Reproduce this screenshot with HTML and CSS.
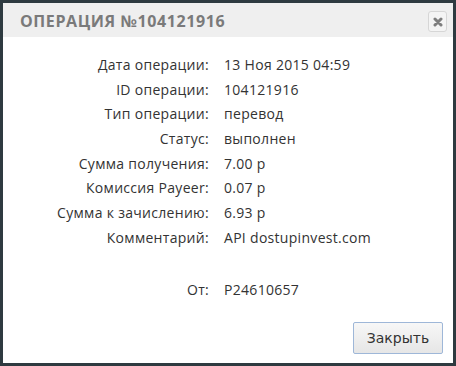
FILE: index.html
```html
<!DOCTYPE html>
<html lang="ru">
<head>
<meta charset="utf-8">
<link rel="stylesheet" href="styles.css">
</head>
<body>
<div class="dialog">
  <div class="header">
    <div class="title">ОПЕРАЦИЯ №104121916</div>
    <button class="close" aria-label="close">
      <svg width="10" height="10" viewBox="0 0 10 10"><path d="M2 2 L8 8 M8 2 L2 8" stroke="#7e7e7e" stroke-width="3" stroke-linecap="round"/></svg>
    </button>
  </div>
  <div class="body">
    <div class="rows">
      <div class="label">Дата операции:</div><div class="value">13 Ноя 2015 04:59</div>
      <div class="label">ID операции:</div><div class="value">104121916</div>
      <div class="label">Тип операции:</div><div class="value">перевод</div>
      <div class="label">Статус:</div><div class="value">выполнен</div>
      <div class="label">Сумма получения:</div><div class="value">7.00 р</div>
      <div class="label">Комиссия Payeer:</div><div class="value">0.07 р</div>
      <div class="label">Сумма к зачислению:</div><div class="value">6.93 р</div>
      <div class="label">Комментарий:</div><div class="value">API dostupinvest.com</div>
      <div class="label spacer"></div><div class="value spacer"></div>
      <div class="label">От:</div><div class="value">P24610657</div>
    </div>
    <div class="footer">
      <button class="btn">Закрыть</button>
    </div>
  </div>
</div>
</body>
</html>
```
FILE: styles.css
```css
html, body {
  margin: 0;
  padding: 0;
  background: #2e3a40;
}
.dialog {
  margin: 3px 3px 0 3px;
  width: 450px;
  height: 360px;
  background: #fff;
  display: flex;
  flex-direction: column;
}
.header {
  height: 34px;
  background: #efefef;
  display: flex;
  align-items: center;
  justify-content: space-between;
  padding: 0 6px 0 17px;
}
.title {
  font-family: "Open Sans", sans-serif;
  font-weight: 700;
  font-size: 16px;
  letter-spacing: 0.6px;
  color: #7a7a7a;
  padding-top: 1px;
}
.close {
  width: 19px;
  height: 21px;
  border: 1px solid #d6d6d6;
  border-radius: 3px;
  background: #f4f4f4;
  display: flex;
  align-items: center;
  justify-content: center;
  padding: 0;
  margin-top: 3px;
}
.body {
  flex: 1;
  display: flex;
  flex-direction: column;
}
.rows {
  display: grid;
  grid-template-columns: 206px 1fr;
  column-gap: 15px;
  row-gap: 0;
  padding-top: 16px;
  font-family: "Open Sans", sans-serif;
  font-size: 14px;
  letter-spacing: 0.3px;
  color: #333;
}
.label, .value {
  height: 24.7px;
  line-height: 24px;
}
.label {
  text-align: right;
}
.spacer {
  height: 27px;
}
.footer {
  margin-top: auto;
  display: flex;
  justify-content: flex-end;
  padding: 0 10px 9px 0;
}
.btn {
  width: 90px;
  height: 32px;
  border: 1px solid #9eb7d8;
  border-radius: 2px;
  background: linear-gradient(#f7f7f7, #e6e6e6);
  font-family: "DejaVu Sans", sans-serif;
  font-size: 14px;
  color: #333;
}
```
